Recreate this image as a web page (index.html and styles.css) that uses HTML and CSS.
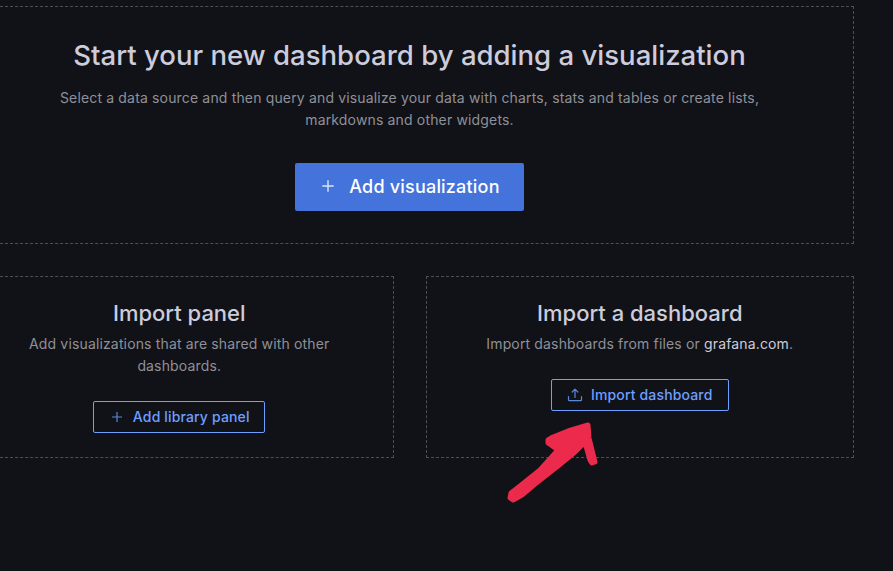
FILE: index.html
```html
<!DOCTYPE html>
<html lang="en">
<head>
    <meta charset="UTF-8">
    <meta name="viewport" content="width=device-width, initial-scale=1.0">
    <title>New dashboard</title>
    <link rel="stylesheet" href="styles.css">
</head>
<body>
    <div class="page">
        <!-- Add visualization -->
        <div class="box box-main">
            <h1>Start your new dashboard by adding a visualization</h1>
            <p class="main-text">Select a data source and then query and visualize your data with charts, stats and tables or create lists, markdowns and other widgets.</p>
            <button class="btn-primary">
                <svg class="icon-plus-large" viewBox="0 0 16 16" fill="none" stroke="currentColor" stroke-width="1.6"><path d="M8 1.5v13M1.5 8h13"/></svg>
                Add visualization
            </button>
        </div>

        <div class="row">
            <!-- Import panel -->
            <div class="box box-small">
                <h2>Import panel</h2>
                <p class="small-text">Add visualizations that are shared with other dashboards.</p>
                <button class="btn-outline btn-library">
                    <svg class="icon" viewBox="0 0 16 16" fill="none" stroke="currentColor" stroke-width="1.2"><path d="M8 3v10M3 8h10"/></svg>
                    Add library panel
                </button>
            </div>

            <!-- Import dashboard -->
            <div class="box box-small">
                <h2>Import a dashboard</h2>
                <p class="small-text">Import dashboards from files or <a href="#">grafana.com</a>.</p>
                <button class="btn-outline btn-import">
                    <svg class="icon" viewBox="0 0 16 16" fill="none" stroke="currentColor" stroke-width="1.2" stroke-linecap="round" stroke-linejoin="round"><path d="M8 10.5V2.5M5.2 5L8 2.2 10.8 5M1.5 9.5v3.2c0 .6.4 1 1 1h11c.6 0 1-.4 1-1V9.5"/></svg>
                    Import dashboard
                </button>
            </div>
        </div>
    </div>

    <!-- Hand drawn arrow on top of the screenshot -->
    <svg class="arrow" viewBox="0 0 893 571" fill="#ec2a4c" stroke="#ec2a4c" stroke-linecap="round" stroke-linejoin="round">
        <path stroke-width="5" d="M511 493 L520 486 L540 470 L558 450 L551 445 L548 443 L548 440 L553 437 L568 431 L588 425 L589 438 L592 450 L595 462 L592 463 L590 460 L586 446 L583 444 L575 452 L558 466 L535 484 L522 495 L513 500 L510 498 Z"/>
    </svg>
</body>
</html>
```

FILE: styles.css
```css
html, body {
    margin: 0;
    padding: 0;
    height: 571px;
    overflow: hidden;
    background-color: #111217;
}
body {
    font-family: Inter, "Liberation Sans", sans-serif;
    position: relative;
}
.page {
    width: 889px;
    margin-left: -35px;
    padding-top: 6px;
}
.box {
    border: 1px dashed rgba(204, 204, 220, 0.32);
    box-sizing: border-box;
    display: flex;
    flex-direction: column;
    align-items: center;
    text-align: center;
}
.box-main {
    height: 238px;
    padding: 31px 64px 0;
}
h1 {
    margin: 0;
    font-size: 27.55px;
    font-weight: 500;
    line-height: 34px;
    color: #ccccdc;
}
.main-text {
    width: 720px;
    margin: 15px 0 32px;
    font-size: 14px;
    line-height: 22px;
    letter-spacing: 0.16px;
    color: #8f9098;
}
.btn-primary {
    display: flex;
    align-items: center;
    justify-content: center;
    gap: 14px;
    width: 229px;
    height: 48px;
    padding: 0 0 2px 2px;
    border: none;
    border-radius: 2px;
    background-color: #4473dc;
    color: #fff;
    font-family: inherit;
    font-size: 18px;
    font-weight: 500;
    letter-spacing: 0.2px;
    cursor: pointer;
}
.icon-plus-large {
    width: 14px;
    height: 14px;
    color: #dce6fa;
}
.row {
    display: flex;
    gap: 32px;
    margin-top: 32px;
}
.box-small {
    flex: 1;
    height: 182px;
    padding: 23px 32px 0;
}
h2 {
    margin: 0;
    font-size: 22px;
    font-weight: 500;
    line-height: 26px;
    color: #ccccdc;
}
.small-text {
    width: 340px;
    margin: 7px 0 24px;
    font-size: 14px;
    line-height: 22px;
    letter-spacing: 0.15px;
    color: #8f9098;
}
.small-text a {
    color: #ccccdc;
    text-decoration: none;
}
.btn-outline {
    display: flex;
    align-items: center;
    justify-content: center;
    gap: 8px;
    height: 32px;
    padding: 0 0 1px;
    border: 1px solid #6e9fff;
    border-radius: 2px;
    background: transparent;
    color: #6e9fff;
    font-family: inherit;
    font-size: 14px;
    font-weight: 500;
    letter-spacing: 0.15px;
    cursor: pointer;
}
.btn-library {
    width: 172px;
}
.btn-import {
    width: 178px;
}
.icon {
    width: 16px;
    height: 16px;
    color: #5b87d8;
}
.arrow {
    position: absolute;
    left: 0;
    top: 0;
    width: 893px;
    height: 571px;
    pointer-events: none;
}
```
